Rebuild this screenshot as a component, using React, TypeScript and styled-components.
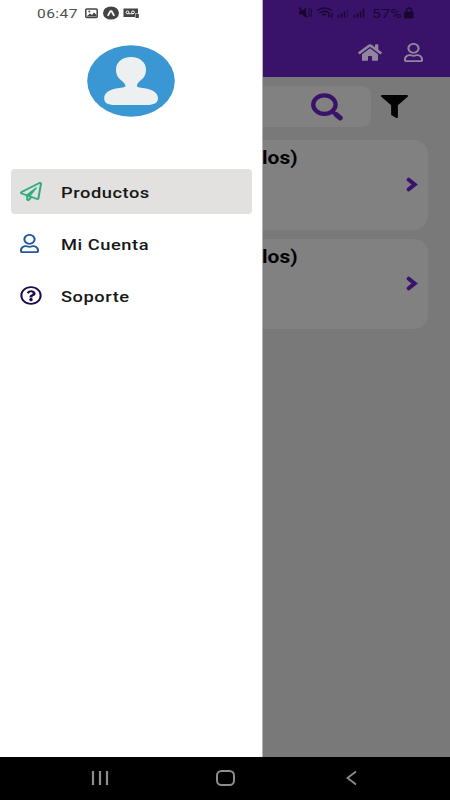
import React from "react";
import styled, { createGlobalStyle } from "styled-components";
import {
  FaFilter,
  FaHome,
  FaRegPaperPlane,
  FaRegQuestionCircle,
  FaRegUser,
} from "react-icons/fa";

const GlobalStyle = createGlobalStyle`
  * { box-sizing: border-box; }
  body { margin: 0; font-family: Roboto, "Liberation Sans", sans-serif; }
`;

const Phone = styled.div`
  width: 450px;
  height: 800px;
  display: flex;
  flex-direction: column;
  overflow: hidden;
  background: #000;
`;

const Screen = styled.div`
  height: 757px;
  display: flex;
`;

const Drawer = styled.aside`
  width: 263px;
  flex: none;
  background: #fff;
  border-right: 1px solid #b4b4b4;
  display: flex;
  flex-direction: column;
`;

const WideText = styled.span<{ $stretch: number; $gap?: number }>`
  display: inline-block;
  white-space: nowrap;
  transform: scaleX(${(p) => p.$stretch});
  transform-origin: left center;
  letter-spacing: ${(p) => p.$gap ?? 0}px;
`;

const Glyph = styled.span<{ $w: number; $h: number }>`
  display: flex;
  flex: none;
  width: ${(p) => p.$w}px;
  height: ${(p) => p.$h}px;

  svg {
    width: 100%;
    height: 100%;
  }
`;

const StatusLeft = styled.div`
  height: 27px;
  padding: 0 0 1px 37px;
  display: flex;
  align-items: center;
  color: #444;
`;

const Clock = styled.div`
  width: 47px;
  font-size: 13.5px;
  color: #505050;
`;

const AvatarRow = styled.div`
  height: 142px;
  padding: 18px 0 0 87px;
`;

const Menu = styled.nav`
  padding: 0 10px 0 11px;
  display: flex;
  flex-direction: column;
  gap: 7px;
`;

const MenuItem = styled.a<{ $active?: boolean; $tint: string }>`
  height: 45px;
  border-radius: 4px;
  padding-left: 9px;
  display: flex;
  align-items: center;
  background: ${(p) => (p.$active ? "#e2e1e0" : "transparent")};
  color: ${(p) => p.$tint};
`;

const MenuIcon = styled.span`
  width: 41px;
  display: flex;
`;

const MenuLabel = styled.span`
  padding-top: 2px;
  color: #171717;
  font-size: 15.5px;
  font-weight: 500;
  line-height: 20px;
`;

const Backdrop = styled.main`
  flex: 1;
  min-width: 0;
  overflow: hidden;
  background: #797979;
`;

const TopBar = styled.header`
  height: 77px;
  background: #391269;
`;

const StatusRight = styled.div`
  height: 27px;
  padding: 0 0 1px 35px;
  display: flex;
  align-items: center;
  color: #180631;
`;

const Battery = styled.div`
  width: 32px;
  margin-left: 4px;
  font-size: 13.5px;
`;

const TopActions = styled.div`
  height: 50px;
  padding-right: 27px;
  display: flex;
  justify-content: flex-end;
  align-items: center;
  gap: 22px;
  color: #91869f;
`;

const SearchRow = styled.div`
  height: 63px;
  padding-top: 9px;
  display: flex;
  gap: 10px;
`;

const SearchField = styled.div`
  width: 108px;
  height: 41px;
  border-radius: 0 9px 9px 0;
  background: #818181;
  padding: 7px 0 0 47px;
`;

const FilterButton = styled.div`
  padding-top: 9px;
  color: #030303;
`;

const CardList = styled.div`
  display: flex;
  flex-direction: column;
  gap: 9px;
`;

const Card = styled.article`
  width: 165px;
  height: 90px;
  border-radius: 0 14px 14px 0;
  background: #818181;
  padding-right: 10px;
  display: flex;
  justify-content: space-between;
`;

const CardTitle = styled.h2`
  margin: 7px 0 0 -1px;
  font-size: 17.5px;
  line-height: 22px;
  font-weight: 700;
  color: #030303;
`;

const CardArrow = styled.div`
  padding-top: 37px;
`;

const NavBar = styled.footer`
  height: 43px;
  padding: 0 92px 1px 91px;
  display: flex;
  align-items: center;
`;

const NavKey = styled.span<{ $before: number }>`
  display: flex;
  margin-left: ${(p) => p.$before}px;
`;

const Avatar = () => (
  <svg width="88" height="72" viewBox="0 0 88 72">
    <ellipse cx="44" cy="36" rx="43.8" ry="35.8" fill="#3b97d3" />
    <path
      d="M44 12 C53 12 59 17.500 59 24.500 C59 31 56 33.500 53 36 C50.500 38 49.500 40 50 41.500 C52 43.500 70.500 42.500 71 53 C71.200 58 66.500 60 60 60 H28 C21 60 17 58 17.200 53 C17.700 42.500 36 43.500 38.300 41.500 C38.800 40 37.500 38 35 36 C32 33.500 29 31 29 24.500 C29 17.500 35 12 44 12Z"
      fill="#ecf0f1"
    />
  </svg>
);

const NoticeIcons = () => (
  <svg width="56" height="14" viewBox="0 0 56 14" fill="none">
    <rect x="1.800" y="3" width="11.400" height="8.500" rx="1" stroke="#444" strokeWidth="1.500" />
    <path d="M3 10 6 7.500 8 9 10 6.500 12.500 9 V10.500 H3Z" fill="#444" />
    <circle cx="5.300" cy="5.600" r="1" fill="#444" />
    <ellipse cx="27" cy="7" rx="8" ry="6.600" fill="#444" />
    <path d="M23.800 9.800 26.500 5 H27.500 L30.200 9.800" stroke="#fff" strokeWidth="1.700" strokeLinejoin="round" />
    <path d="M39.500 2.500H54V7.500H51V11H39.500Z" fill="#444" />
    <circle cx="43.500" cy="6.300" r="1.400" stroke="#fff" strokeWidth="1" />
    <circle cx="49" cy="6.300" r="1.400" stroke="#fff" strokeWidth="1" />
    <path d="M43.500 7.700H49" stroke="#fff" strokeWidth=".9" />
    <rect x="51.500" y="8" width="3.300" height="4" fill="#444" />
  </svg>
);

const SignalIcons = () => (
  <svg width="70" height="14" viewBox="0 0 70 14" fill="none" stroke="currentColor">
    <path d="M1 5H4L8 1.500V11.500L4 8.500H1Z" fill="currentColor" stroke="none" />
    <path d="M1 1.500 9 11" strokeWidth="1.400" />
    <path d="M10.500 2 11.500 4 10.500 6 11.500 8 10.500 11M13 2.500 13.800 5 12.800 7.500 13.500 10.500" strokeWidth="1" />
    <path d="M19 4.500Q26.500-.5 34 4.500M21.500 7Q26.500 3.500 31.500 7M24 9.300Q26.500 7.500 28 9" strokeWidth="1.500" />
    <path d="M31 11.500V7.500M34 7.500V11.500" strokeWidth="1.500" />
    <path d="M40.500 11.500V9M43.500 11.500V7.500M46.500 11.500V5.500M56.500 11.500V9M59.500 11.500V7.500M62.500 11.500V5.500M65.500 11.500V2.500" strokeWidth="1.500" />
    <path d="M49.500 11.500V3" strokeWidth="1.200" opacity=".45" />
  </svg>
);

const BatteryIcon = () => (
  <svg width="10" height="12" viewBox="0 0 10 12">
    <path d="M2.500 5V3.500Q2.500 1 5 1T7.500 3.500V5" fill="none" stroke="currentColor" strokeWidth="1.400" />
    <rect y="4.500" width="9.500" height="7" rx="1.200" fill="currentColor" />
  </svg>
);

const SearchIcon = () => (
  <svg width="36" height="30" viewBox="0 0 36 30" fill="none" stroke="#391269">
    <path d="M22 18.500 26 21.500" strokeWidth="3.500" />
    <path d="M26 21.500 30.300 25" strokeWidth="5" strokeLinecap="round" />
    <ellipse cx="14.400" cy="11.600" rx="11.200" ry="9.200" strokeWidth="4.300" />
  </svg>
);

const Chevron = () => (
  <svg width="12" height="15" viewBox="0 0 12 15" fill="none" stroke="#391269">
    <path d="M2.700 2.700 8.700 7.500 2.700 12.300" strokeWidth="4" strokeLinecap="round" />
  </svg>
);

const menu = [
  { label: "Productos", tint: "#2fae7c", Icon: FaRegPaperPlane, width: 22 },
  { label: "Mi Cuenta", tint: "#245a9c", Icon: FaRegUser, width: 19 },
  { label: "Soporte", tint: "#1c0a50", Icon: FaRegQuestionCircle, width: 22 },
];

const products = ["los)", "los)"];

export default function App() {
  return (
    <>
      <GlobalStyle />
      <Phone>
        <Screen>
          <Drawer>
            <StatusLeft>
              <Clock>
                <WideText $stretch={1.15} $gap={0.4}>06:47</WideText>
              </Clock>
              <NoticeIcons />
            </StatusLeft>
            <AvatarRow>
              <Avatar />
            </AvatarRow>
            <Menu>
              {menu.map(({ label, tint, Icon, width }, i) => (
                <MenuItem key={label} $active={i === 0} $tint={tint}>
                  <MenuIcon>
                    <Glyph $w={width} $h={19}>
                      <Icon preserveAspectRatio="none" />
                    </Glyph>
                  </MenuIcon>
                  <MenuLabel>
                    <WideText $stretch={1.18} $gap={0.45}>{label}</WideText>
                  </MenuLabel>
                </MenuItem>
              ))}
            </Menu>
          </Drawer>
          <Backdrop>
            <TopBar>
              <StatusRight>
                <SignalIcons />
                <Battery>
                  <WideText $stretch={1.16} $gap={0.3}>57%</WideText>
                </Battery>
                <BatteryIcon />
              </StatusRight>
              <TopActions>
                <Glyph $w={24} $h={19}>
                  <FaHome preserveAspectRatio="none" />
                </Glyph>
                <Glyph $w={19} $h={19}>
                  <FaRegUser preserveAspectRatio="none" />
                </Glyph>
              </TopActions>
            </TopBar>
            <SearchRow>
              <SearchField>
                <SearchIcon />
              </SearchField>
              <FilterButton>
                <Glyph $w={27} $h={23}>
                  <FaFilter preserveAspectRatio="none" />
                </Glyph>
              </FilterButton>
            </SearchRow>
            <CardList>
              {products.map((title, i) => (
                <Card key={i}>
                  <CardTitle>
                    <WideText $stretch={1.2}>{title}</WideText>
                  </CardTitle>
                  <CardArrow>
                    <Chevron />
                  </CardArrow>
                </Card>
              ))}
            </CardList>
          </Backdrop>
        </Screen>
        <NavBar>
          <NavKey $before={0}>
            <svg width="18" height="16" viewBox="0 0 18 16" stroke="#8d8d8d" strokeWidth="2.200">
              <path d="M2 1V15M9 1V15M16 1V15" />
            </svg>
          </NavKey>
          <NavKey $before={107}>
            <svg width="20" height="16" viewBox="0 0 20 16" fill="none" stroke="#8d8d8d" strokeWidth="2">
              <rect x="1" y="1" width="17" height="14" rx="4.500" />
            </svg>
          </NavKey>
          <NavKey $before={110}>
            <svg width="11" height="16" viewBox="0 0 11 16" fill="none" stroke="#8d8d8d" strokeWidth="1.800">
              <path d="M10 1.500 1.500 8 10 14.500" />
            </svg>
          </NavKey>
        </NavBar>
      </Phone>
    </>
  );
}
